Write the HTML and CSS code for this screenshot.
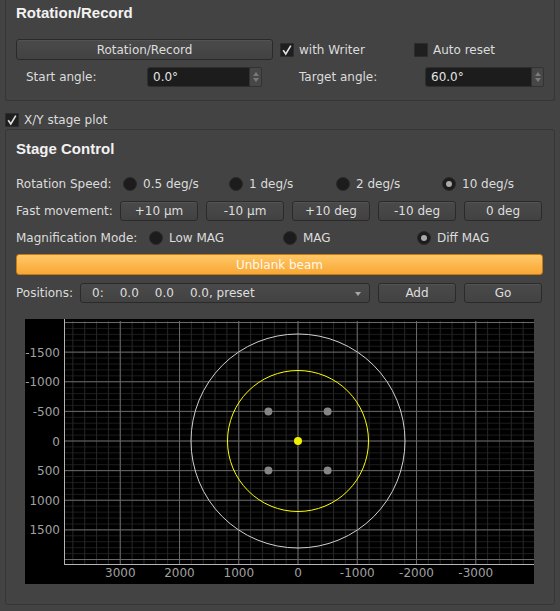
FILE: index.html
```html
<!DOCTYPE html>
<html>
<head>
<meta charset="utf-8">
<title>Stage Control</title>
<link rel="stylesheet" href="styles.css">
</head>
<body>
<div class="group group-top">
  <div class="title">Rotation/Record</div>
  <div class="row row-rec">
    <div class="btn btn-rec">Rotation/Record</div>
    <div class="check check-writer"><span class="box"><svg viewBox="0 0 14 14" width="14" height="14"><path d="M3.2 7.2 L5.8 11 L10.8 2.6" fill="none" stroke="#e2e2e2" stroke-width="1.6"/></svg></span>with Writer</div>
    <div class="check"><span class="box"></span>Auto reset</div>
  </div>
  <div class="row row-angle">
    <span class="lbl lbl-start">Start angle:</span>
    <div class="spin spin-start"><span class="val">0.0°</span><span class="arrows"><i class="up"></i><i class="down"></i></span></div>
    <span class="lbl lbl-target">Target angle:</span>
    <div class="spin spin-target"><span class="val">60.0°</span><span class="arrows"><i class="up"></i><i class="down"></i></span></div>
  </div>
</div>

<div class="check check-xy"><span class="box"><svg viewBox="0 0 14 14" width="14" height="14"><path d="M3.2 7.2 L5.8 11 L10.8 2.6" fill="none" stroke="#e2e2e2" stroke-width="1.6"/></svg></span>X/Y stage plot</div>

<div class="group group-stage">
  <div class="title">Stage Control</div>

  <div class="row row-speed">
    <span class="lbl">Rotation Speed:</span>
    <div class="radio-item"><span class="radio"></span>0.5 deg/s</div>
    <div class="radio-item"><span class="radio"></span>1 deg/s</div>
    <div class="radio-item"><span class="radio"></span>2 deg/s</div>
    <div class="radio-item"><span class="radio on"></span>10 deg/s</div>
  </div>

  <div class="row row-fast">
    <span class="lbl">Fast movement:</span>
    <div class="btn">+10 µm</div>
    <div class="btn">-10 µm</div>
    <div class="btn">+10 deg</div>
    <div class="btn">-10 deg</div>
    <div class="btn">0 deg</div>
  </div>

  <div class="row row-mag">
    <span class="lbl">Magnification Mode:</span>
    <div class="radio-item"><span class="radio"></span>Low MAG</div>
    <div class="radio-item"><span class="radio"></span>MAG</div>
    <div class="radio-item"><span class="radio on"></span>Diff MAG</div>
  </div>

  <div class="unblank">Unblank beam</div>

  <div class="row row-pos">
    <span class="lbl">Positions:</span>
    <div class="combo"><span>0:</span><span>0.0</span><span>0.0</span><span>0.0, preset</span><i class="caret"></i></div>
    <div class="btn">Add</div>
    <div class="btn">Go</div>
  </div>

  <div class="plot">
    <svg width="509" height="265" viewBox="0 0 509 265">
      <defs>
        <pattern id="vmin" patternUnits="userSpaceOnUse" x="272.5" y="0" width="11.85" height="20"><rect x="0" y="0" width="1" height="20" fill="#262626"/></pattern>
        <pattern id="hmin" patternUnits="userSpaceOnUse" x="0" y="121.5" width="20" height="5.925"><rect x="0" y="0" width="20" height="1" fill="#1c1c1c"/></pattern>
        <pattern id="vmaj" patternUnits="userSpaceOnUse" x="272.5" y="0" width="59.25" height="20"><rect x="0" y="0" width="1" height="20" fill="#686868"/></pattern>
        <pattern id="hmaj" patternUnits="userSpaceOnUse" x="0" y="121.5" width="20" height="29.625"><rect x="0" y="0" width="20" height="1" fill="#686868"/></pattern>
        <clipPath id="area"><rect x="40" y="2" width="469" height="243"/></clipPath>
      </defs>
      <rect x="0" y="0" width="509" height="265" fill="#000"/>
      <g clip-path="url(#area)">
        <rect x="40" y="2" width="469" height="243" fill="url(#hmin)"/>
        <rect x="40" y="2" width="469" height="243" fill="url(#vmin)"/>
        <rect x="40" y="2" width="469" height="243" fill="url(#hmaj)"/>
        <rect x="40" y="2" width="469" height="243" fill="url(#vmaj)"/>
        <circle cx="273" cy="122" r="107" fill="none" stroke="#d0d0d0" stroke-width="1"/>
        <circle cx="273" cy="122" r="70.5" fill="none" stroke="#ffff00" stroke-width="1"/>
        <circle cx="243.4" cy="92.4" r="4" fill="#858585"/>
        <circle cx="302.6" cy="92.4" r="4" fill="#858585"/>
        <circle cx="243.4" cy="151.6" r="4" fill="#858585"/>
        <circle cx="302.6" cy="151.6" r="4" fill="#858585"/>
        <circle cx="273" cy="122" r="4" fill="#f0f000"/>
      </g>
      <line x1="39.5" y1="0" x2="39.5" y2="245.5" stroke="#b4b4b4" stroke-width="1"/>
      <line x1="39" y1="245.5" x2="509" y2="245.5" stroke="#b4b4b4" stroke-width="1"/>
      <g class="ylab" text-anchor="end">
        <text x="35" y="37.6">-1500</text>
        <text x="35" y="67.2">-1000</text>
        <text x="35" y="96.9">-500</text>
        <text x="35" y="126.5">0</text>
        <text x="35" y="156.1">500</text>
        <text x="35" y="185.7">1000</text>
        <text x="35" y="215.4">1500</text>
      </g>
      <g class="xlab" text-anchor="middle">
        <text x="95.3" y="257.5">3000</text>
        <text x="154.5" y="257.5">2000</text>
        <text x="213.8" y="257.5">1000</text>
        <text x="273" y="257.5">0</text>
        <text x="332.3" y="257.5">-1000</text>
        <text x="391.5" y="257.5">-2000</text>
        <text x="450.8" y="257.5">-3000</text>
      </g>
    </svg>
  </div>
</div>
</body>
</html>
```

FILE: styles.css
```css
html, body {
  margin: 0;
  padding: 0;
}
body {
  width: 560px;
  height: 611px;
  overflow: hidden;
  background: #434343;
  color: #dcdcdc;
  font-family: "DejaVu Sans", "Noto Sans", sans-serif;
  font-size: 12px;
}

.group {
  margin: 0 5px;
  border: 1px solid #363636;
  border-radius: 3px;
  padding: 0 10px;
  box-sizing: border-box;
}
.group-top {
  height: 101px;
  border-top: none;
  border-radius: 0 0 3px 3px;
}
.group-stage {
  margin-top: 2px;
  height: 476px;
  padding-top: 10px;
}

.title {
  font-family: "Liberation Sans", Arial, sans-serif;
  font-weight: bold;
  font-size: 15px;
  line-height: 18px;
  color: #f2f2f2;
}
.group-top .title {
  padding-top: 4px;
}

.row {
  display: flex;
  align-items: center;
}
.lbl {
  white-space: nowrap;
  flex-shrink: 0;
}

.btn {
  box-sizing: border-box;
  flex-shrink: 0;
  height: 20px;
  border: 1px solid #2a2a2a;
  border-radius: 3px;
  background: linear-gradient(#4a4a4a, #424242);
  box-shadow: inset 0 1px 0 rgba(255,255,255,0.05);
  display: flex;
  align-items: center;
  justify-content: center;
  color: #dedede;
  white-space: nowrap;
}

/* top group */
.row-rec {
  margin-top: 17px;
  height: 21px;
}
.btn-rec {
  width: 257px;
  height: 21px;
  margin-right: 7px;
}
.check {
  display: flex;
  align-items: center;
  height: 14px;
  white-space: nowrap;
}
.check .box {
  box-sizing: border-box;
  width: 14px;
  height: 14px;
  background: #1f1f1f;
  border: 1px solid #2c2c2c;
  border-radius: 1px;
  margin-right: 5px;
  display: block;
  position: relative;
}
.check .box svg {
  position: absolute;
  left: -1px;
  top: -1px;
}
.check-writer {
  width: 134px;
}

.row-angle {
  margin-top: 7px;
  height: 20px;
}
.lbl-start {
  margin-left: 10px;
  width: 121px;
}
.lbl-target {
  margin-left: 37px;
  width: 126px;
}
.spin {
  box-sizing: border-box;
  height: 20px;
  background: #1c1c1c;
  border: 1px solid #2e2e2e;
  border-radius: 3px;
  display: flex;
  align-items: center;
  justify-content: space-between;
  padding-left: 5px;
  color: #e4e4e4;
}
.spin-start { width: 115px; }
.spin-target { width: 119px; }
.arrows {
  box-sizing: border-box;
  width: 13px;
  height: 20px;
  margin-right: -1px;
  background: #474747;
  border: 1px solid #333;
  border-radius: 2px;
  display: flex;
  flex-direction: column;
  align-items: center;
  justify-content: center;
  gap: 2px;
}
.arrows i {
  display: block;
  width: 0;
  height: 0;
  border-left: 3.5px solid transparent;
  border-right: 3.5px solid transparent;
}
.arrows .up { border-bottom: 4px solid #7a7a7a; }
.arrows .down { border-top: 4px solid #7a7a7a; }

.check-xy {
  margin: 12px 0 0 5px;
}

/* stage group */
.row-speed {
  margin-top: 16px;
  height: 20px;
}
.row-speed .lbl { width: 107px; }
.row-speed .radio-item:nth-of-type(1) { width: 106px; }
.row-speed .radio-item:nth-of-type(2) { width: 107px; }
.row-speed .radio-item:nth-of-type(3) { width: 106px; }

.radio-item {
  display: flex;
  align-items: center;
  white-space: nowrap;
  flex-shrink: 0;
}
.radio {
  box-sizing: border-box;
  width: 14px;
  height: 14px;
  border-radius: 50%;
  background: #1c1c1c;
  border: 1px solid #2a2a2a;
  margin-right: 6px;
  display: flex;
  align-items: center;
  justify-content: center;
}
.radio.on::after {
  content: "";
  width: 6px;
  height: 6px;
  border-radius: 50%;
  background: #a9a9a9;
}

.row-fast {
  margin-top: 7px;
  height: 20px;
  gap: 8px;
}
.row-fast .lbl { width: 96px; }
.row-fast .btn { width: 78px; }

.row-mag {
  margin-top: 7px;
  height: 20px;
}
.row-mag .lbl { width: 133px; }
.row-mag .radio-item { width: 134px; }

.unblank {
  box-sizing: border-box;
  margin-top: 6px;
  width: 527px;
  height: 21px;
  border: 1px solid #c57a14;
  border-radius: 3px;
  background: linear-gradient(#ffc868, #f8a734);
  color: #fff8ee;
  display: flex;
  align-items: center;
  justify-content: center;
}

.row-pos {
  margin-top: 8px;
  height: 20px;
  gap: 8px;
}
.row-pos .lbl { width: 56px; }
.combo {
  box-sizing: border-box;
  flex-shrink: 0;
  width: 290px;
  height: 20px;
  border: 1px solid #2a2a2a;
  border-radius: 3px;
  background: linear-gradient(#4a4a4a, #424242);
  display: flex;
  align-items: center;
  gap: 16px;
  padding-left: 11px;
  position: relative;
  color: #dedede;
  white-space: nowrap;
}
.caret {
  position: absolute;
  right: 8px;
  top: 8px;
  width: 0;
  height: 0;
  border-left: 3.5px solid transparent;
  border-right: 3.5px solid transparent;
  border-top: 4px solid #a8a8a8;
}
.row-pos .btn { width: 78px; }

.plot {
  margin: 16px 0 0 9px;
  width: 509px;
  height: 265px;
}
.plot svg {
  display: block;
}
.ylab text, .xlab text {
  font-family: "DejaVu Sans", sans-serif;
  font-size: 12px;
  fill: #a0a0a0;
}
```
